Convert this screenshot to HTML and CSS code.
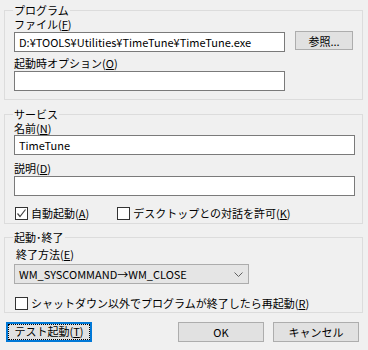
FILE: index.html
```html
<!DOCTYPE html>
<html lang="ja">

<head>
  <meta charset="UTF-8">
  <meta name="viewport" content="width=device-width, initial-scale=1.0">
  <title>サービス設定</title>
  <link rel="stylesheet" href="styles.css">
</head>

<body>
  <div class="dialog">
    <fieldset class="group program">
      <legend>プログラム</legend>
      <div class="cap">ファイル(<u>F</u>)</div>
      <div class="row">
        <input class="field file" type="text" value="D:¥TOOLS¥Utilities¥TimeTune¥TimeTune.exe">
        <button class="btn browse">参照...</button>
      </div>
      <div class="cap cap-gap">起動時オプション(<u>O</u>)</div>
      <input class="field file" type="text" value="">
    </fieldset>

    <fieldset class="group service">
      <legend>サービス</legend>
      <div class="cap">名前(<u>N</u>)</div>
      <input class="field wide" type="text" value="TimeTune">
      <div class="cap cap-wide">説明(<u>D</u>)</div>
      <input class="field wide" type="text" value="">
      <div class="checks">
        <label class="check">
          <span class="box">
            <svg width="11" height="11" viewBox="0 0 11 11"><path d="M1.5 5.5 L4 8.5 L9.5 1.5" fill="none" stroke="#444" stroke-width="1.2"/></svg>
          </span>自動起動(<u>A</u>)
        </label>
        <label class="check">
          <span class="box"></span>デスクトップとの対話を許可(<u>K</u>)
        </label>
      </div>
    </fieldset>

    <fieldset class="group startstop">
      <legend>起動･終了</legend>
      <div class="cap cap-tall">終了方法(<u>E</u>)</div>
      <div class="combo">
        <span>WM_SYSCOMMAND→WM_CLOSE</span>
        <svg width="9" height="5" viewBox="0 0 9 5"><path d="M0.5 0.5 L4.5 4.5 L8.5 0.5" fill="none" stroke="#606060" stroke-width="1"/></svg>
      </div>
      <div class="checks single">
        <label class="check">
          <span class="box"></span>シャットダウン以外でプログラムが終了したら再起動(<u>R</u>)
        </label>
      </div>
    </fieldset>

    <div class="buttons">
      <button class="btn default"><span class="focus">テスト起動(<u>T</u>)</span></button>
      <span class="spacer"></span>
      <button class="btn">OK</button>
      <button class="btn">キャンセル</button>
    </div>
  </div>
</body>

</html>
```

FILE: styles.css
```css
* {
  box-sizing: border-box;
}

body {
  margin: 0;
  width: 368px;
  height: 350px;
  overflow: hidden;
  background: #f0f0f0;
  color: #000;
  font-family: "Noto Sans CJK JP", "Noto Sans", sans-serif;
  font-size: 11px;
}

.dialog {
  padding: 3px 0 0 4px;
}

.group {
  width: 359px;
  min-width: 0;
  margin: 0;
  padding: 0 9px 8px 9px;
  border: 1px solid #dcdcdc;
}

.group legend {
  margin-left: -1px;
  padding: 0 1px;
  height: 14px;
  line-height: 14px;
}

.service {
  margin-top: 7px;
  padding-bottom: 2px;
}

.startstop {
  margin-top: 6px;
  padding-bottom: 1px;
}

.cap {
  height: 15px;
  line-height: 15px;
}

.service .cap {
  height: 14px;
  line-height: 14px;
}

.cap-gap {
  margin-top: 4px;
}

.service .cap-wide {
  margin-top: 6px;
  height: 15px;
  line-height: 15px;
}

.cap-tall {
  height: 20px;
  line-height: 20px;
  margin-left: 2px;
}

.row {
  display: flex;
  align-items: flex-start;
}

.field {
  display: block;
  height: 20px;
  margin: 0;
  padding: 0 4px;
  border: 1px solid #7a7a7a;
  background: #fff;
  font: inherit;
  color: #000;
  outline: none;
}

.file {
  width: 271px;
}

.wide {
  width: 341px;
}

.btn {
  height: 20px;
  width: 86px;
  margin: 0;
  padding: 0;
  border: 1px solid #adadad;
  background: #e1e1e1;
  font: inherit;
  color: #000;
}

.browse {
  width: 58px;
  height: 19px;
  margin: -1px 0 0 10px;
}

.checks {
  display: flex;
  align-items: center;
  gap: 27px;
  height: 15px;
  margin-top: 10px;
}

.checks.single {
  height: 16px;
  margin-top: 11px;
}

.check {
  display: flex;
  align-items: center;
  line-height: 15px;
  margin-left: 1px;
}

.box {
  display: flex;
  align-items: center;
  justify-content: center;
  width: 13px;
  height: 13px;
  margin-right: 3px;
  border: 1px solid #333;
  background: #fff;
}

.combo {
  display: flex;
  align-items: center;
  justify-content: space-between;
  width: 235px;
  height: 20px;
  padding: 0 5px 0 4px;
  border: 1px solid #acacac;
  background: #e5e5e5;
}

.buttons {
  display: flex;
  width: 355px;
  margin-top: 9px;
  padding-left: 2px;
}

.spacer {
  flex: 1;
}

.buttons .btn + .btn {
  margin-left: 9px;
}

.default {
  border-color: #0078d7;
  box-shadow: inset 0 0 0 1px #0078d7;
  padding: 2px;
}

.focus {
  display: block;
  height: 14px;
  line-height: 13px;
  outline: 1px dotted #000;
}
```
